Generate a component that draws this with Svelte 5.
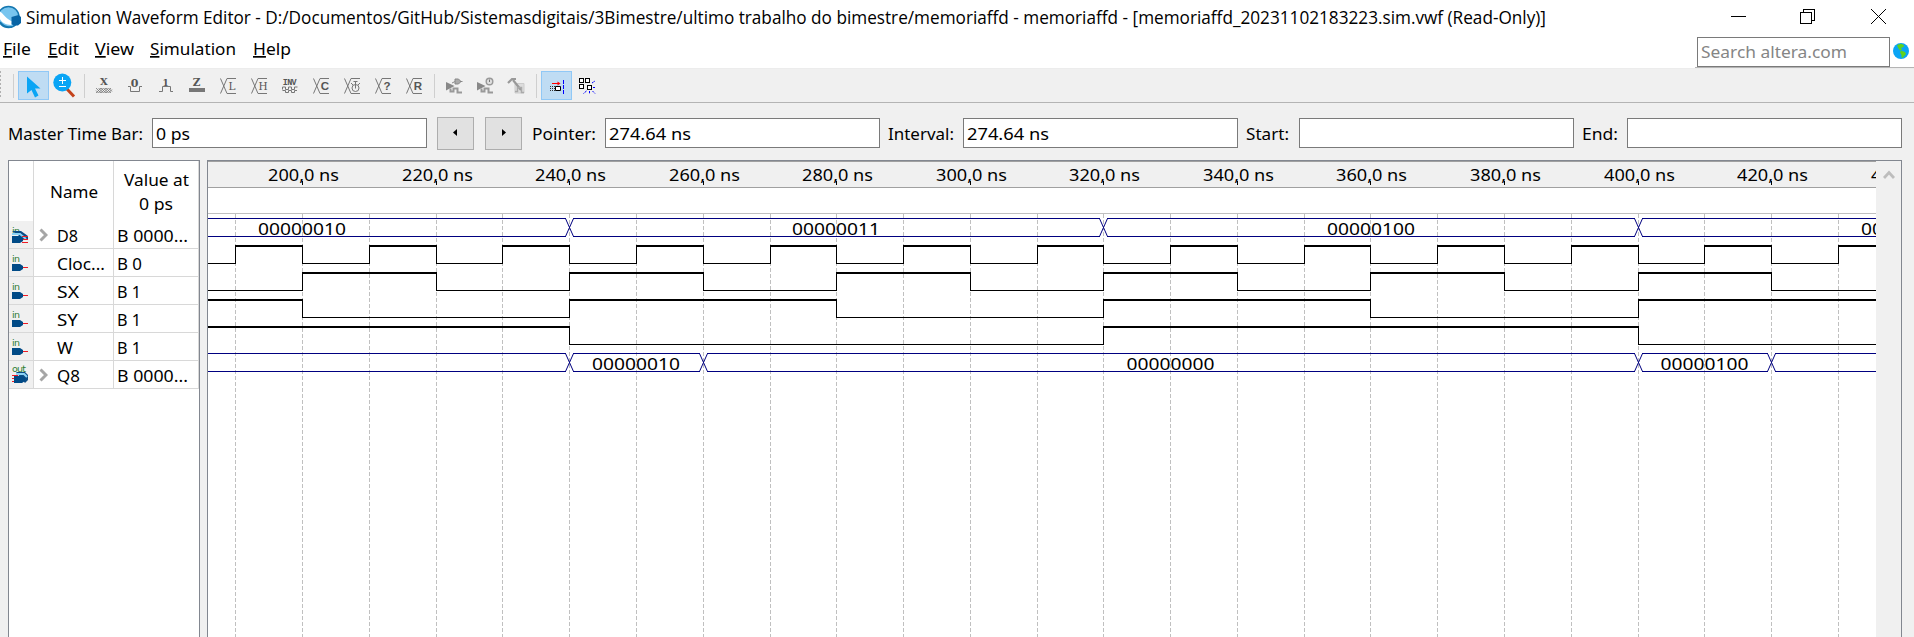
<script>
  const menus = [
    { key: 'F', rest: 'ile', w: 28, gap: 17 },
    { key: 'E', rest: 'dit', w: 31, gap: 16 },
    { key: 'V', rest: 'iew', w: 39, gap: 16 },
    { key: 'S', rest: 'imulation', w: 86, gap: 17 },
    { key: 'H', rest: 'elp', w: 38, gap: 0 }
  ];
  const tools = ['cursor', 'zoom', '|', 'X', '0', '1', 'Z', 'bL', 'bH', 'INV', 'bC', 'bT', 'b?', 'bR', '|', 'func', 'timing', 'script', '|', 'snap', 'grid'];

  const signals = [
    { name: 'D8', nw: 21, value: 'B 0000...', vw: 71, bus: true, dir: 'in' },
    { name: 'Cloc...', nw: 48, value: 'B 0', vw: 25, dir: 'in' },
    { name: 'SX', nw: 22, value: 'B 1', vw: 24, dir: 'in' },
    { name: 'SY', nw: 21, value: 'B 1', vw: 24, dir: 'in' },
    { name: 'W', nw: 16, value: 'B 1', vw: 24, dir: 'in' },
    { name: 'Q8', nw: 23, value: 'B 0000...', vw: 71, bus: true, dir: 'out' }
  ];

  // k counts 10 ns steps, starting at 190 ns
  const gx = (k) => Math.round(235.3 + 66.775 * k);
  const steps = Array.from({ length: 25 }, (_, k) => k);
  const ticks = Array.from({ length: 13 }, (_, i) => ({ x: gx(2 * i + 1), label: `${200 + 20 * i},0 ns` }));

  const waves = [
    { y: 245, start: 0, edges: steps },
    { y: 272, start: 0, edges: [1, 3, 5, 7, 9, 11, 13, 15, 17, 19, 21, 23] },
    { y: 299, start: 1, edges: [1, 5, 9, 13, 17, 21] },
    { y: 326, start: 1, edges: [5, 13, 21] }
  ];
  function segments(w) {
    const out = [];
    let x = 208;
    let level = w.start;
    for (const k of w.edges) {
      out.push({ x, w: gx(k) - x + 1, level });
      out.push({ edge: gx(k) });
      x = gx(k);
      level = 1 - level;
    }
    out.push({ x, w: 1876 - x, level });
    return out;
  }

  const buses = [
    { y: 218, cuts: [5, 13, 21], texts: [[302, '00000010'], [836, '00000011'], [1371, '00000100'], [1905, '00000101']] },
    { y: 353, cuts: [5, 7, 21, 23], texts: [[636, '00000010'], [1170.5, '00000000'], [1704.5, '00000100']] }
  ];
  function rails(b) {
    const xs = [204, ...b.cuts.map(gx), 1880];
    return xs.slice(0, -1).map((x, i) => [x + 4, xs[i + 1] - 4]);
  }
</script>

{#snippet label(text, w, size = 17, h = 24, base = 18)}
  <svg class="label" width={w} height={h}><text x="0" y={base} font-size={size} textLength={w} lengthAdjust="spacingAndGlyphs">{text}</text></svg>
{/snippet}

<div class="window">
  <header class="title">
    <svg width="22" height="30" viewBox="0 0 22 30">
      <circle cx="8.5" cy="17" r="10.5" fill="#78c5ef" stroke="#1577b0" stroke-width="1.4" />
      <path d="M-1 11.500C3 12 6 20 13 21.500L11 25C4 25-1 20-1 16Z" fill="#fff" />
      <path d="M0 22Q5 28 12 27" fill="none" stroke="#1577b0" stroke-width="1.5" />
      <path d="M11.500 17l7-2 2.500 2v6l-3 2.500h-5l-1.500-2z" fill="#0864a5" />
    </svg>
    <div class="caption">{@render label('Simulation Waveform Editor - D:/Documentos/GitHub/Sistemasdigitais/3Bimestre/ultimo trabalho do bimestre/memoriaffd - memoriaffd - [memoriaffd_20231102183223.sim.vwf (Read-Only)]', 1520, 18, 30, 24)}</div>
    <svg class="controls" width="183" height="34" viewBox="1731 0 183 34" fill="none" stroke="#000" shape-rendering="crispEdges">
      <path d="M1731 16.5h15M1800.5 12.5h11v11h-11zM1803.5 12V9.5h11v11H1812" />
      <path d="M1871 9l15 15M1886 9l-15 15" shape-rendering="auto" />
    </svg>
  </header>

  <nav class="menubar">
    {#each menus as m}
      <svg class="label" width={m.w} height="30" style="margin-right:{m.gap}px">
        <text x="0" y="21" font-size="17" textLength={m.w} lengthAdjust="spacingAndGlyphs"><tspan class="key">{m.key}</tspan>{m.rest}</text>
      </svg>
    {/each}
    <div class="searchwrap">
      <div class="search">{@render label('Search altera.com', 146, 17, 24, 17)}</div>
      <svg width="16" height="16" viewBox="0 0 16 16">
        <circle cx="8" cy="8" r="8" fill="#0aa5f5" />
        <path d="M4 2L8 .8 11 2l-.5 2L8 5l1 2-2 .5L5.500 5.500zM8 7.500l4 1.500 1 2-3.500 4-1-.5V12L7 9.500z" fill="#5fd21c" />
      </svg>
    </div>
  </nav>

  <div class="toolbar">
    <i class="grip"></i>
    <i class="sep first"></i>
    {#each tools as t}
      {#if t === '|'}
        <i class="sep"></i>
      {:else}
        <div class="tool" class:on={t === 'cursor' || t === 'snap'}>
          <svg width="31" height="29" viewBox="0 0 31 29" fill="none" stroke="#777" stroke-width="1">
            {#if t === 'cursor'}
              <path d="M9 5.500V22.500L13.500 19 17 26.500 20.500 24.500 17 17.500H22.500Z" fill="#0aa5f5" stroke="none" />
            {:else if t === 'zoom'}
              <path d="M18 18l7 7.500" stroke="#c4421a" stroke-width="3" />
              <circle cx="13.300" cy="11.500" r="9" fill="#0aa5f5" stroke="none" />
              <path d="M10 9.500h7M13.500 6v7M10 15.500h7" stroke="#fff" />
            {:else if t === 'X'}
              <text class="serif" x="15" y="14" font-size="10">X</text>
              <path d="M7 17l5 5 5-5 5 5M7 22l5-5 5 5 5-5M9.500 17l5 5 5-5 3.500 3.500M7 19.500l2.500 2.500 5-5 5 5 3.500-3.500" stroke-width=".8" />
            {:else if t === '0'}
              <text class="serif" x="14.700" y="16" font-size="11">0</text>
              <path d="M8 15.500h2.500v5h9v-5h2.500" />
            {:else if t === '1'}
              <text class="serif" x="14.700" y="14.500" font-size="9">1</text>
              <path d="M8 20.500h3.500v-5h8v5h2.500" />
            {:else if t === 'Z'}
              <text class="serif" x="14.700" y="14.800" font-size="10.500">Z</text>
              <path d="M7 19h16" stroke-width="4" />
            {:else if t === 'INV'}
              <text class="mono" x="14.700" y="13.500" font-size="8.500" textLength="14">INV</text>
              <path d="M7.500 18.500v-2.500h3v2.500h3v-2.500h3v2.500h3v-2.500h3M7.500 19.500h3v2h3v-2h3v2h3v-2h2.500" />
            {:else if t[0] === 'b'}
              <path d="M7.500 7.500L14 22.500H23M7.500 22.500L14 7.500H23" />
              {#if t === 'bT'}
                <circle cx="18.500" cy="17" r="3.500" /><path d="M18.500 17.500v-7M16.500 10.500h4M14 12l2 2M23 12l-2 2" />
              {:else if t === 'bL' || t === 'bH'}
                <text class="serif thin" x="19" y="18.500" font-size="10.500">{t[1]}</text>
              {:else}
                <text class="sans" x="19" y="18.800" font-size="11.500">{t[1]}</text>
              {/if}
            {:else if t === 'func' || t === 'timing'}
              <path d="M7 11l8.500 4L7 19.500z" fill="#888" stroke="none" />
              <path d="M11.500 17.500v3h3v-3h4v4h4.500" stroke="#999" stroke-width="2" />
              {#if t === 'func'}
                <path d="M16 8h3.500l2.500 2.500-2.500 2.500H16z" fill="#aaa" stroke="#888" /><path d="M13 12l3-1.500M21 10.500h2.500" stroke="#888" />
              {:else}
                <circle cx="19.500" cy="10.500" r="3.300" fill="#ddd" stroke="#999" stroke-width="1.400" /><path d="M19.500 8.500v2.500" />
              {/if}
            {:else if t === 'script'}
              <path d="M14 12.500h9v9.500h-9z" fill="#ddd" stroke="#ccc" />
              <path d="M7 12l4-4h4M12 9l8 10" stroke="#999" stroke-width="2.200" />
              <path d="M14 20.500h2.500v-4h4v5h2.500" stroke="#aaa" stroke-width="1.500" />
            {:else if t === 'snap'}
              <path d="M11 12.500h6" stroke="#f00" /><path d="M16.500 10.500l3 2-3 2z" fill="#f00" stroke="none" />
              <path d="M9 15.500h6M9 19.500h6M9 17.500h6" stroke="#333" stroke-dasharray="1 1" />
              <path d="M14.500 15.500h5v4h-5z" fill="#fff" stroke="#000" />
              <path d="M22.500 9v14" stroke="#00f" stroke-dasharray="4 1" />
            {:else}
              <g stroke="#000" fill="#fff" shape-rendering="crispEdges"><path d="M7.500 7.500h4v4h-4zM13.500 7.500h4v4h-4zM7.500 13.500h4v4h-4zM15.500 14.500h4v4h-4z" /></g>
              <path d="M20 12l3-2M21 16.500h2M20.500 20l2.500 2.500M17.500 20v3M14.500 20l-3 2.500" stroke="#00f" stroke-dasharray="2 .7" />
            {/if}
          </svg>
        </div>
      {/if}
    {/each}
  </div>

  <div class="fields">
    <div class="lab" style="width:144px">{@render label('Master Time Bar:', 135)}</div>
    <div class="field">{@render label('0 ps', 34)}</div>
    <div class="btn"><svg width="4" height="7"><path d="M4 0v7L0 3.500z" /></svg></div>
    <div class="btn second"><svg width="4" height="7"><path d="M0 0v7l4-3.500z" /></svg></div>
    <div class="lab" style="width:73px">{@render label('Pointer:', 64)}</div>
    <div class="field">{@render label('274.64 ns', 82)}</div>
    <div class="lab gap" style="width:75px">{@render label('Interval:', 66)}</div>
    <div class="field">{@render label('274.64 ns', 82)}</div>
    <div class="lab gap" style="width:53px">{@render label('Start:', 43)}</div>
    <div class="field"></div>
    <div class="lab gap" style="width:45px">{@render label('End:', 36)}</div>
    <div class="field"></div>
  </div>

  <main class="work">
    <section class="list">
      <div class="row head">
        <div class="pin"></div>
        <div class="name">{@render label('Name', 48)}</div>
        <div class="val">{@render label('Value at', 65)}{@render label('0 ps', 34)}</div>
      </div>
      {#each signals as s}
        <div class="row">
          <div class="pin">
            <svg width="24" height="27" viewBox="0 0 24 27">
              {#if s.dir === 'in'}
                <text class="pintext" x="3" y="13" textLength="8">in</text>
                {#if s.bus}
                  <path d="M3 10h9l7 5v4h-5l-5-5z" fill="#0b4d86" /><path d="M3 13h8l6 5" fill="none" stroke="#8bd3f5" stroke-width="2" />
                  <path d="M13 15.500h6M13 18.500h6M13 21.500h6" stroke="#ed1c24" />
                {/if}
                <path d="M14 18.500h5" stroke="#ed1c24" />
                <path d="M3 15h8l3 2v3l-3 2H3z" fill="#004a86" />
              {:else}
                <text class="pintext" x="3" y="11" textLength="14">out</text>
                <path d="M3 14.500h6M3 17.500h6M3 20.500h6" stroke="#ed1c24" />
                <path d="M7 11h9l3 3v5l-3 3z" fill="#0b4d86" /><path d="M7 13h8l3 3" fill="none" stroke="#8bd3f5" stroke-width="2" />
                <path d="M5 15h8l3 2v3l-3 2H5z" fill="#004a86" />
              {/if}
            </svg>
          </div>
          <div class="name">
            {#if s.bus}<svg class="chev" width="9" height="14"><path d="M1.500 1.500L7 7l-5.500 5.500" fill="none" stroke="#a6a6a6" stroke-width="3" /></svg>{/if}
            <span class="nm">{@render label(s.name, s.nw, 17, 27, 21)}</span>
          </div>
          <div class="val">{@render label(s.value, s.vw, 17, 27, 21)}</div>
        </div>
      {/each}
    </section>

    <section class="wave">
      <svg width="1668" height="476" viewBox="208 161 1668 476" shape-rendering="crispEdges">
        <rect x="208" y="161" width="1668" height="476" fill="#fff" />
        <rect x="208" y="161" width="1668" height="26" fill="#f0f0f0" />
        <path d="M208 161.500h1668M208 187.500h1668" stroke="#a0a0a0" />
        <path d="M208 213.500h1668" stroke="#c0c0c0" />
        {#each steps as k}
          <path d="M{gx(k) + 0.5} 214V637" stroke="#c0c0c0" stroke-dasharray="4 2" />
        {/each}
        {#each ticks as t}
          <path d="M{t.x + 0.5} 181v4" stroke="#000" />
          <text x={t.x - 34} y="181" font-size="16.500" textLength="71" lengthAdjust="spacingAndGlyphs">{t.label}</text>
        {/each}
        {#each waves as w}
          {#each segments(w) as s}
            {#if s.edge}
              <rect x={s.edge} y={w.y} width="1" height="19" />
            {:else if s.level}
              <rect x={s.x} y={w.y} width={s.w} height="2" />
            {:else}
              <rect x={s.x} y={w.y + 18} width={s.w} height="1" />
            {/if}
          {/each}
        {/each}
        {#each buses as b}
          <g fill="none" stroke="#000080">
            {#each rails(b) as [x1, x2]}
              <path d="M{x1} {b.y + 0.5}H{x2 + 1}M{x1} {b.y + 18.5}H{x2 + 1}" />
            {/each}
            {#each b.cuts as k}
              <path d="M{gx(k) - 3.5} {b.y + 0.5}l8 18m0-18l-8 18" shape-rendering="auto" />
            {/each}
          </g>
          {#each b.texts as [x, t]}
            <text x={x - 44} y={b.y + 17} font-size="16.500" textLength="88" lengthAdjust="spacingAndGlyphs">{t}</text>
          {/each}
        {/each}
      </svg>
      <div class="scroll"><svg width="12" height="9"><path d="M1 8l5-5.500L11 8" fill="none" stroke="#bdbdbd" stroke-width="2.800" /></svg></div>
    </section>
  </main>
</div>

<style>
  :global(body) { margin: 0; overflow: hidden; }
  .window { width: 1914px; height: 637px; overflow: hidden; background: #f0f0f0; font-family: 'Noto Sans', 'Open Sans', sans-serif; color: #000; display: flex; flex-direction: column; }
  svg { display: block; flex: none; }
  .label { overflow: visible; }
  .label text { fill: currentColor; }
  .title { height: 34px; display: flex; background: #fff; flex: none; }
  .caption { margin-left: 4px; font-family: 'Open Sans', sans-serif; }
  .controls { margin-left: auto; }
  .menubar { height: 34px; display: flex; background: #fff; padding-left: 3px; flex: none; }
  .key { text-decoration: underline; }
  .searchwrap { margin-left: auto; width: 217px; height: 33px; border-bottom: 1px solid #b4b4b4; display: flex; align-items: center; gap: 3px; padding-left: 2px; }
  .search { box-sizing: border-box; width: 193px; height: 30px; border: 1px solid #7a7a7a; color: #858585; padding: 3px 0 0 3px; margin-top: 2px; }
  .toolbar { box-sizing: border-box; height: 35px; border-top: 1px solid #ececec; border-bottom: 1px solid #b4b4b4; display: flex; padding-top: 2px; flex: none; }
  .grip { width: 1px; height: 27px; margin-right: 12px; background: repeating-linear-gradient(#b0b0b0 0 2px, transparent 2px 4px); }
  .sep { width: 1px; height: 24px; margin: 3px 4px 0; background: #cfcfcf; }
  .sep.first { margin-left: 0; }
  .tool { width: 31px; height: 29px; }
  .on { background: #bfdcf3; box-shadow: inset 0 0 0 1px #90c8f6; }
  .tool text { stroke: none; fill: #555; text-anchor: middle; font-weight: bold; }
  .serif { font-family: 'DejaVu Serif', serif; }
  .tool .thin { font-weight: normal; }
  .mono { font-family: 'Liberation Mono', monospace; }
  .sans { font-family: 'Liberation Sans', sans-serif; }
  .fields { height: 57px; flex: none; display: flex; align-items: flex-start; padding: 14px 0 0 8px; box-sizing: border-box; }
  .lab { margin-top: 5px; }
  .lab.gap { margin-left: 8px; }
  .field { box-sizing: border-box; width: 275px; height: 30px; margin-top: 1px; border: 1px solid #7a7a7a; background: #fff; padding: 3px 0 0 3px; }
  .btn { box-sizing: border-box; width: 37px; height: 33px; margin-left: 10px; border: 1px solid #adadad; background: #e1e1e1; display: flex; justify-content: center; padding: 11px 2px 0 0; }
  .btn.second { margin: 0 10px 0 11px; padding: 11px 0 0 1px; }
  .work { display: flex; flex: none; height: 477px; padding-left: 8px; gap: 7px; }
  .list { box-sizing: border-box; width: 192px; border: 1px solid #828790; border-bottom: 0; background: #fff; }
  .row { display: flex; height: 28px; }
  .row > div { box-sizing: border-box; border-right: 1px solid #d8d8d8; border-bottom: 1px solid #d8d8d8; flex: none; }
  .pin { width: 25px; background: #f0f0f0; }
  .name { width: 80px; display: flex; }
  .val { width: 85px; padding-left: 3px; }
  .nm { margin-left: auto; width: 56px; }
  .chev { margin: 7px -15px 0 5px; }
  .row.head { height: 60px; }
  .row.head > div { border-bottom: 0; }
  .head .pin { background: #fff; }
  .head .name { padding: 19px 0 0 16px; }
  .head .val { padding: 7px 0 0; display: flex; flex-direction: column; align-items: center; }
  .pintext { font: 9.500px 'DejaVu Sans', sans-serif; fill: #2e7d32; }
  .wave { box-sizing: border-box; width: 1695px; border: 1px solid #828790; border-bottom: 0; display: flex; }
  .wave text { fill: #000; }
  .scroll { flex: 1; display: flex; justify-content: center; padding-top: 9px; }
</style>
